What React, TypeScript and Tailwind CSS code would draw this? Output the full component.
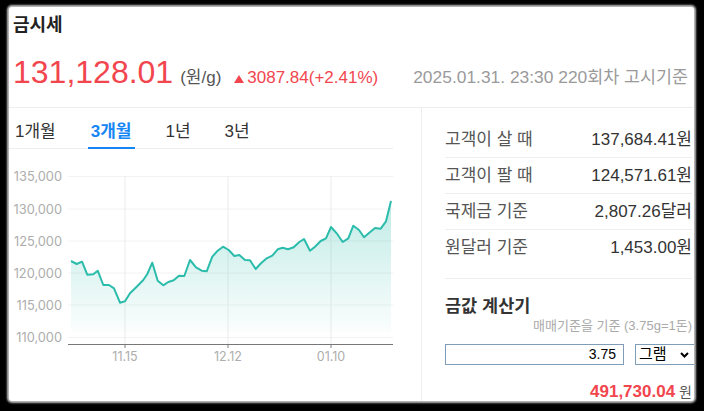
import React from "react";

const pts: [number, number][] = [
  [71, 261], [76.7, 264], [82, 261.7], [87.3, 274.7], [93.3, 274.3], [97.7, 270.7],
  [103.3, 285], [109, 285], [114, 288.3], [120, 302.7], [125, 301.3], [130, 293.3],
  [136.7, 286.7], [143.3, 280], [147.3, 274], [152.3, 262.7], [157.7, 280.7], [163.3, 285.3],
  [168.3, 282], [173.7, 280.3], [179, 275.7], [184.3, 276], [190, 260], [196, 267.3],
  [201.7, 270.7], [206.7, 271.3], [212.3, 256.7], [217.7, 250.7], [223, 246.7], [228.7, 250],
  [234.3, 256], [239.3, 255], [245, 260], [250, 260.3], [255.7, 269], [261, 263.3],
  [266.7, 258.3], [272.3, 255.7], [277.7, 249.3], [282.7, 247.7], [288, 249.3], [293.7, 247.3],
  [299.3, 242], [304, 239], [310, 250.7], [315, 246.7], [320.7, 241], [326, 238.3],
  [331, 227], [336.7, 233.3], [342.7, 242], [348.3, 238.3], [353.3, 225.7], [359, 230],
  [364, 237.3], [369.3, 232.7], [375, 228], [380.7, 228.7], [386, 221.3], [391, 201],
];

const line = pts.map((p, i) => `${i === 0 ? "M" : "L"}${p[0]} ${p[1]}`).join(" ");
const area = `${line} L391 332 L71 332 Z`;

const yTicks: [string, number][] = [
  ["135,000", 176.5],
  ["130,000", 209],
  ["125,000", 241],
  ["120,000", 273],
  ["115,000", 305],
  ["110,000", 337.5],
];
const xTicks: [string, number][] = [
  ["11.15", 125],
  ["12.12", 228],
  ["01.10", 331],
];

function Chart() {
  return (
    <svg width="412" height="252" viewBox="0 0 412 252" className="block">
      <defs>
        <linearGradient id="goldFill" x1="0" y1="200" x2="0" y2="332" gradientUnits="userSpaceOnUse">
          <stop offset="0" stopColor="#2bbcab" stopOpacity="0.3" />
          <stop offset="1" stopColor="#2bbcab" stopOpacity="0.02" />
        </linearGradient>
      </defs>
      <g transform="translate(-9,-149)">
        {yTicks.map(([t, y]) => (
          <g key={t}>
            <line x1="68" x2="393" y1={y} y2={y} stroke="#f2f2f2" strokeWidth="1" />
            <text
              x="62"
              y={y + 4.5}
              textAnchor="end"
              fontSize="12.8"
              fill="#adadad"
              fontFamily="Inter, 'Liberation Sans', sans-serif"
            >
              {t}
            </text>
          </g>
        ))}
        {xTicks.map(([t, x]) => (
          <g key={t}>
            <line x1={x} x2={x} y1="176" y2="348" stroke="#ebebeb" strokeWidth="1" />
            <line x1={x} x2={x} y1="344" y2="348" stroke="#888" strokeWidth="1" />
            <text
              x={x}
              y="361"
              textAnchor="middle"
              fontSize="12.5"
              fill="#adadad"
              fontFamily="Inter, 'Liberation Sans', sans-serif"
            >
              {t}
            </text>
          </g>
        ))}
        <path d={area} fill="url(#goldFill)" />
        <path d={line} fill="none" stroke="#2bbcab" strokeWidth="2" strokeLinejoin="round" />
        <line x1="68" x2="393" y1="344.5" y2="344.5" stroke="#777" strokeWidth="1" />
      </g>
    </svg>
  );
}

const rows: [string, string, string][] = [
  ["고객이 살 때", "137,684.41", "원"],
  ["고객이 팔 때", "124,571.61", "원"],
  ["국제금 기준", "2,807.26", "달러"],
  ["원달러 기준", "1,453.00", "원"],
];

export default function App() {
  return (
    <div
      className="w-[704px] h-[411px] bg-black pt-[7px] pl-[9px] pr-[10px] pb-[10px] overflow-hidden"
      style={{ fontFamily: "'Liberation Sans', 'Noto Sans CJK KR', sans-serif" }}
    >
      <div className="w-[685px] h-[394px] bg-white rounded-[3px] overflow-hidden shadow-[0_0_2px_2px_rgba(210,210,210,0.9)]">
        <div className="w-[700px]">
          {/* header */}
          <div className="h-[101px] border-b border-[#eeeeee] pl-[4px] pt-[6px]">
            <div className="text-[18px] leading-[24px] font-bold text-[#222]">금시세</div>
            <div className="mt-[15px] flex items-baseline whitespace-nowrap">
              <span className="text-[32px] leading-[40px] text-[#f2464f]">131,128.01</span>
              <span className="ml-[7px] text-[17px] text-[#555]">(원/g)</span>
              <span className="ml-[13px] text-[17px] text-[#f2464f] flex items-baseline">
                <svg width="10" height="8" viewBox="0 0 10 8" className="mr-[3px] self-center mt-[3px]">
                  <path d="M5 0 L10 8 L0 8 Z" fill="#f2464f" />
                </svg>
                3087.84(+2.41%)
              </span>
              <span className="ml-[35px] text-[17.4px] text-[#9a9a9a]">2025.01.31. 23:30 220회차 고시기준</span>
            </div>
          </div>

          <div className="flex">
            {/* left */}
            <div className="w-[412px] shrink-0">
              <div className="h-[41px] mr-[28px] border-b border-[#eeeeee] flex items-end gap-[29px] pl-[3px]">
                <div className="px-[3px] pb-[3px] leading-[24px] text-[17px] text-[#333] border-b-2 border-transparent -mb-px">
                  1개월
                </div>
                <div className="px-[3px] pb-[3px] leading-[24px] text-[17px] font-bold text-[#1786f5] border-b-2 border-[#1786f5] -mb-px">
                  3개월
                </div>
                <div className="px-[3px] pb-[3px] leading-[24px] text-[17px] text-[#333] border-b-2 border-transparent -mb-px -ml-[1px]">
                  1년
                </div>
                <div className="px-[3px] pb-[3px] leading-[24px] text-[17px] text-[#333] border-b-2 border-transparent -mb-px -ml-[1px]">
                  3년
                </div>
              </div>
              <Chart />
            </div>

            {/* right */}
            <div className="flex-1 min-w-0 border-l border-[#eeeeee] pl-[23px] pr-[17px] pt-[14px]">
              {rows.map(([label, val, unit], i) => (
                <div
                  key={label}
                  className={`h-[36px] flex items-center justify-between text-[17px] whitespace-nowrap ${
                    i < 3 ? "border-b border-[#eeeeee]" : ""
                  }`}
                >
                  <span className="text-[#555]">{label}</span>
                  <span className="text-[#333]">
                    {val}
                    {unit}
                  </span>
                </div>
              ))}
              <div className="mt-[12px] border-t border-[#eeeeee] pt-[15px]">
                <div className="text-[17.5px] leading-[24px] font-bold text-[#333]">금값 계산기</div>
                <div className="text-[13px] leading-[16px] text-[#aaaaaa] text-right whitespace-nowrap">
                  매매기준을 기준 (3.75g=1돈)
                </div>
                <div className="mt-[10px] flex items-center gap-[11px]">
                  <div className="w-[179px] shrink-0 h-[21px] border border-[#7f9db9] flex items-center justify-end pr-[7px] text-[14px] text-black">
                    3.75
                  </div>
                  <div className="w-[64px] shrink-0 h-[21px] border border-[#7f9db9] flex items-center pl-[3px] text-[15px] text-black">
                    <span>그램</span>
                    <svg width="9" height="6" viewBox="0 0 9 6" className="ml-[13px]">
                      <path d="M1 1 L4.5 4.5 L8 1" fill="none" stroke="#000" strokeWidth="2" />
                    </svg>
                  </div>
                </div>
                <div className="mt-[15px] flex items-baseline justify-end leading-[24px] whitespace-nowrap">
                  <span className="text-[17px] font-bold text-[#f2464f]">491,730.04</span>
                  <span className="ml-[4px] text-[14px] text-[#555]">원</span>
                </div>
              </div>
            </div>
          </div>
        </div>
      </div>
    </div>
  );
}
